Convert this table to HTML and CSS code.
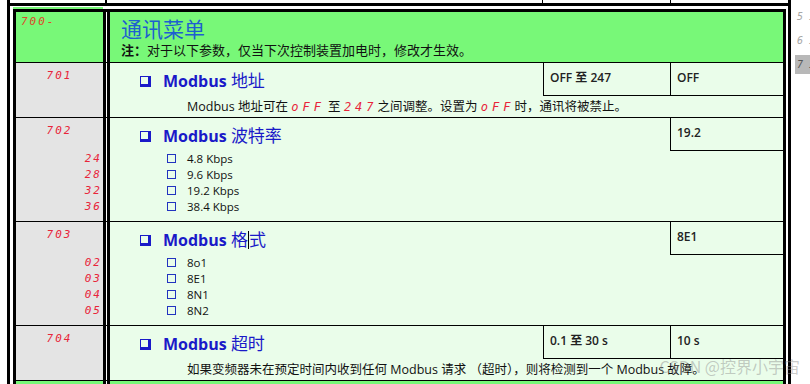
FILE: index.html
```html
<!DOCTYPE html>
<html lang="zh">
<head>
  <meta charset="UTF-8">
  <meta name="viewport" content="width=device-width, initial-scale=1.0">
  <title>通讯菜单</title>
  <link rel="stylesheet" href="styles.css">
</head>
<body>
  <div class="page">
    <div class="sheet">
      <div class="prev-row"><span></span><span></span><span></span><span></span></div>
      <div class="gap-row"><span class="gap-tab"></span></div>

      <div class="menu">
        <section class="row head">
          <div class="code"><span class="seg top">700-</span></div>
          <div class="body">
            <h1>通讯菜单</h1>
            <p class="note"><b>注：</b>对于以下参数，仅当下次控制装置加电时，修改才生效。</p>
          </div>
        </section>

        <section class="row">
          <div class="code"><span class="seg num">701</span></div>
          <div class="body">
            <h2 class="title"><i class="box"></i>Modbus <span class="cn">地址</span></h2>
            <div class="cell range">OFF 至 247</div>
            <div class="cell def">OFF</div>
            <p class="desc">Modbus 地址可在 <span class="seg">oFF</span> 至 <span class="seg">247</span>之间调整。设置为 <span class="seg">oFF</span>时，通讯将被禁止。</p>
          </div>
        </section>

        <section class="row">
          <div class="code">
            <span class="seg num">702</span>
            <ul class="subs seg">
              <li>24</li><li>28</li><li>32</li><li>36</li>
            </ul>
          </div>
          <div class="body">
            <h2 class="title"><i class="box"></i>Modbus <span class="cn">波特率</span></h2>
            <div class="cell def">19.2</div>
            <ul class="opts">
              <li><i class="chk"></i>4.8 Kbps</li>
              <li><i class="chk"></i>9.6 Kbps</li>
              <li><i class="chk"></i>19.2 Kbps</li>
              <li><i class="chk"></i>38.4 Kbps</li>
            </ul>
          </div>
        </section>

        <section class="row">
          <div class="code">
            <span class="seg num">703</span>
            <ul class="subs seg">
              <li>02</li><li>03</li><li>04</li><li>05</li>
            </ul>
          </div>
          <div class="body">
            <h2 class="title"><i class="box"></i>Modbus <span class="cn">格<i class="caret"></i>式</span></h2>
            <div class="cell def">8E1</div>
            <ul class="opts">
              <li><i class="chk"></i>8o1</li>
              <li><i class="chk"></i>8E1</li>
              <li><i class="chk"></i>8N1</li>
              <li><i class="chk"></i>8N2</li>
            </ul>
          </div>
        </section>

        <section class="row">
          <div class="code"><span class="seg num">704</span></div>
          <div class="body">
            <h2 class="title"><i class="box"></i>Modbus <span class="cn">超时</span></h2>
            <div class="cell range">0.1 至 30 s</div>
            <div class="cell def">10 s</div>
            <p class="desc">如果变频器未在预定时间内收到任何 Modbus 请求 （超时），则将检测到一个 Modbus 故障。</p>
          </div>
        </section>

        <section class="row head next">
          <div class="code"></div>
          <div class="body"></div>
        </section>
      </div>
    </div>

    <nav class="side seg">
      <a>5 I</a>
      <a>6 I</a>
      <a class="on">7 I</a>
    </nav>
  </div>

  <div class="mark">CSDN @控界小宇宙</div>
</body>
</html>
```

FILE: styles.css
```css
body {
  margin: 0;
  height: 384px;
  overflow: hidden;
  background: #fff;
  color: #111;
  font-family: "Open Sans", "Noto Sans CJK SC", sans-serif;
}
.page {
  display: flex;
  gap: 4px;
  padding-left: 7px;
  height: 384px;
}
.sheet {
  width: 778px;
  border-left: 3px solid #000;
  border-right: 3px solid #000;
}

/* tail of the previous table */
.prev-row {
  display: grid;
  grid-template-columns: 95px 437px 128px 1fr;
  height: 3px;
  border-bottom: 3px solid #000;
}
.prev-row span + span { border-left: 1px solid #000; }
.prev-row span:nth-child(2) { border-left-width: 2px; }
.gap-row {
  height: 2px;
  padding: 1px 0 0 3px;
}
.gap-tab {
  display: block;
  width: 90px;
  height: 2px;
  background: #78f878;
}

/* menu table */
.menu {
  margin: 0 2px 0 3px;
  border: 3px solid #000;
  border-bottom: none;
}
.row {
  display: grid;
  grid-template-columns: 90px 1fr;
  column-gap: 1px;
  background: #fff;
  border-top: 1px solid #000;
}
.row.head { border-top: none; }
.row.next { border-top: 1px solid #000; height: 20px; }
.code {
  display: flex;
  flex-direction: column;
  align-items: center;
  background: #e4e4e4;
  border-right: 3px solid #000;
}
.body {
  display: grid;
  grid-template-columns: 1fr 127px 113px;
  align-content: start;
  background: #eafdea;
  border-left: 3px solid #000;
}
.head .code,
.head .body { background: #78f878; }
.head .code { align-items: flex-start; }
.head .body { display: block; }

/* seven segment style codes */
.seg {
  font-family: "DejaVu Sans Mono", monospace;
  font-style: italic;
  font-size: 11px;
  letter-spacing: 2px;
  color: #e8253a;
}
.seg.top {
  padding: 2px 0 0 5px;
  line-height: 16px;
  color: #dd4a2a;
}
.num {
  height: 33px;
  padding-top: 5px;
  box-sizing: border-box;
  line-height: 16px;
}
.subs {
  align-self: stretch;
  list-style: none;
  margin: 0;
  padding: 0 1px 0 0;
  text-align: right;
  line-height: 16px;
}

h1 {
  margin: 0;
  padding: 4px 11px 0;
  font-size: 21px;
  line-height: 26px;
  font-weight: 400;
  color: #1d5fd0;
}
.note {
  margin: 0;
  padding: 0 11px 4px;
  font-size: 13px;
  line-height: 16px;
}

.title {
  margin: 0;
  padding: 7px 0 0 30px;
  font-size: 16px;
  line-height: 22px;
  font-weight: 700;
  color: #1a1ac8;
}
.title .cn {
  font-weight: 400;
  font-size: 17px;
}
.box {
  display: inline-block;
  width: 7px;
  height: 7px;
  margin-right: 12px;
  border: 1px solid #1a1ac8;
  border-right-width: 3px;
  border-bottom-width: 3px;
  vertical-align: 0;
}
.caret {
  display: inline-block;
  width: 1px;
  height: 18px;
  background: #000;
  vertical-align: -3px;
}

.cell {
  height: 33px;
  box-sizing: border-box;
  padding: 7px 6px 0;
  border-left: 1px solid #000;
  border-bottom: 1px solid #000;
  font-size: 12px;
  line-height: 16px;
  font-weight: 600;
  color: #222;
}
.range { grid-column: 2; grid-row: 1; }
.def { grid-column: 3; grid-row: 1; }

.opts {
  grid-column: 1;
  list-style: none;
  margin: 0;
  padding: 0 0 6px 57px;
  font-size: 11.5px;
  line-height: 16px;
}
.chk {
  display: inline-block;
  width: 7px;
  height: 7px;
  margin-right: 11px;
  border: 1px solid #2233c0;
  vertical-align: 0;
}

.desc {
  grid-column: 1 / -1;
  margin: 0;
  padding: 3px 0 2px 77px;
  font-size: 12.5px;
  line-height: 16px;
}
.desc .seg { font-size: 12px; letter-spacing: 4px; }

/* page tabs on the right */
.side {
  display: flex;
  flex-direction: column;
  gap: 5px;
  padding-top: 7px;
  width: 15px;
  font-size: 10px;
  letter-spacing: 0;
}
.side a {
  height: 19px;
  line-height: 19px;
  padding-left: 2px;
  color: #a8a8a8;
  white-space: nowrap;
  overflow: hidden;
}
.side a.on {
  background: #b8b8b8;
  color: #555;
}

.mark {
  position: absolute;
  right: 10px;
  bottom: 6px;
  font-family: "Noto Sans CJK SC", sans-serif;
  font-size: 16px;
  color: rgba(140, 140, 140, 0.45);
}
```
